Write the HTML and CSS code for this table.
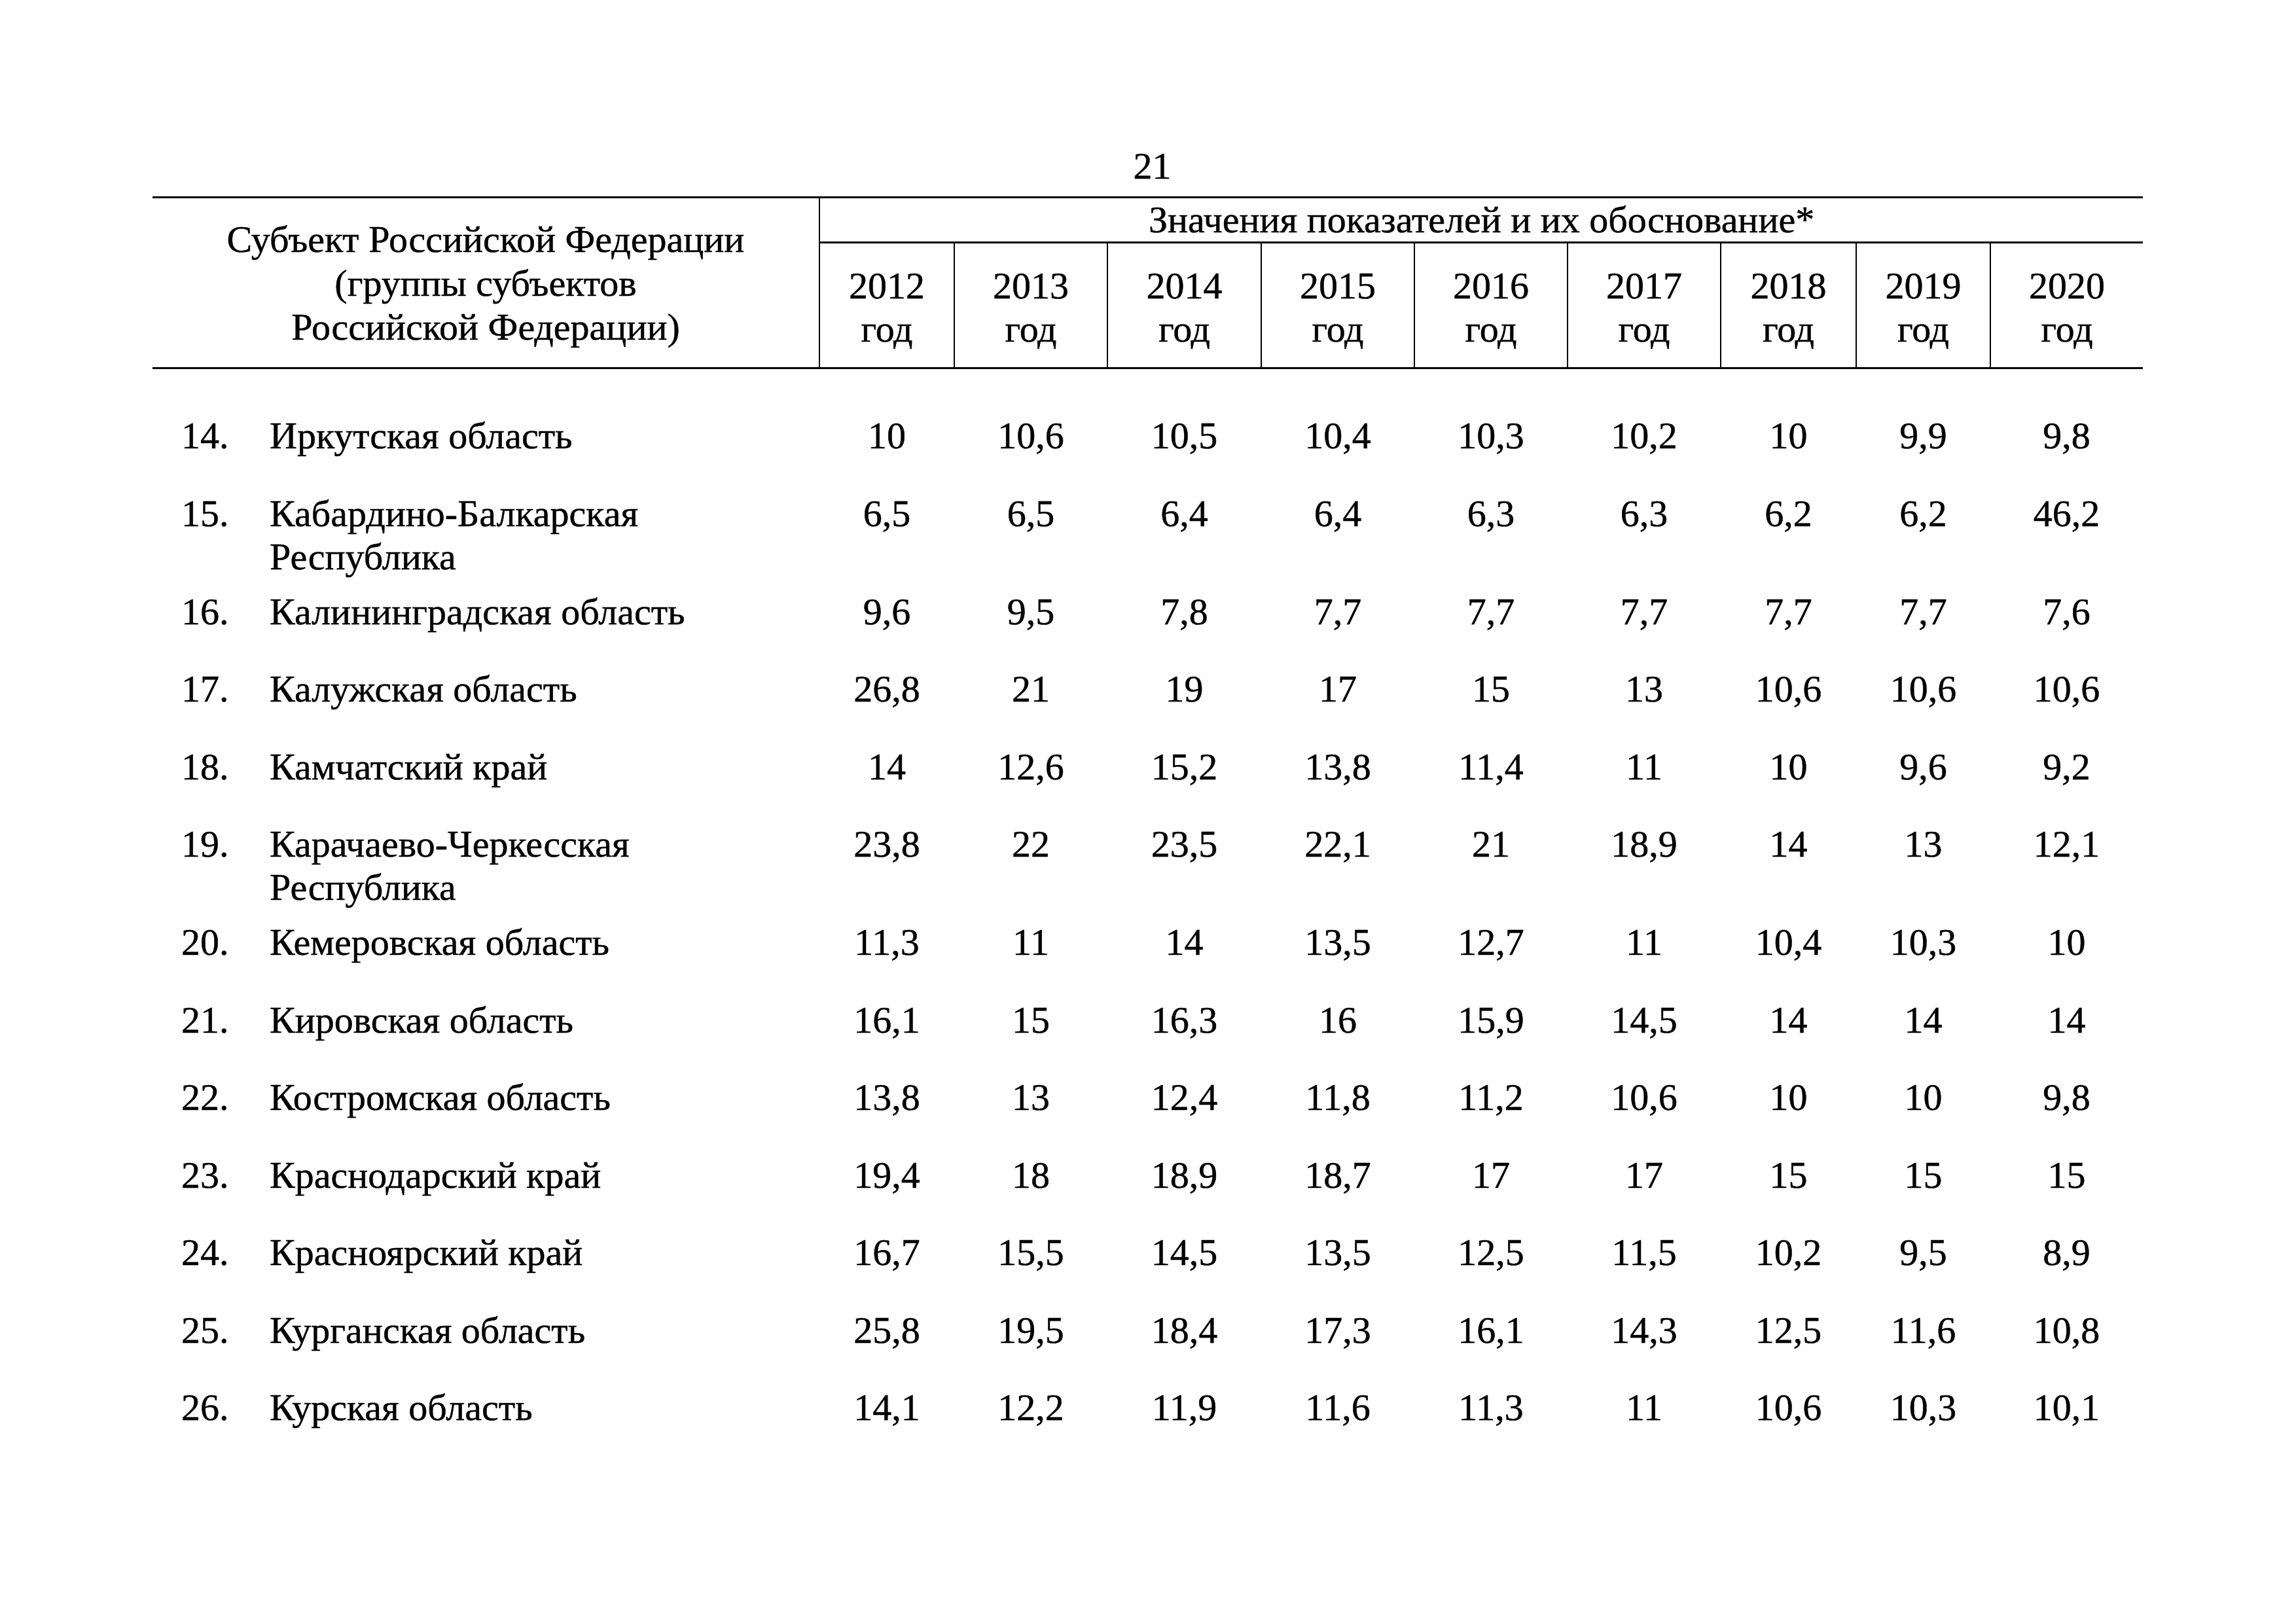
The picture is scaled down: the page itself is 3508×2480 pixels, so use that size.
FILE: index.html
```html
<!DOCTYPE html>
<html lang="ru">
<head>
<meta charset="utf-8">
<title>21</title>
<link rel="stylesheet" href="styles.css">
</head>
<body>
<div class="page">
  <div class="page-num">21</div>
  <table class="data">
    <colgroup>
      <col class="c-num"><col class="c-name">
      <col class="c-205"><col class="c-234"><col class="c-235"><col class="c-234"><col class="c-234"><col class="c-234"><col class="c-207"><col class="c-205b"><col class="c-233">
    </colgroup>
    <thead>
      <tr class="h1">
        <th class="subj" colspan="2" rowspan="2">Субъект Российской Федерации<br>(группы субъектов<br>Российской Федерации)</th>
        <th class="vals" colspan="9">Значения показателей и их обоснование*</th>
      </tr>
      <tr class="h2">
        <th class="yr">2012<br>год</th>
        <th class="yr">2013<br>год</th>
        <th class="yr">2014<br>год</th>
        <th class="yr">2015<br>год</th>
        <th class="yr">2016<br>год</th>
        <th class="yr">2017<br>год</th>
        <th class="yr">2018<br>год</th>
        <th class="yr">2019<br>год</th>
        <th class="yr">2020<br>год</th>
      </tr>
    </thead>
    <tbody>
      <tr class="spacer"><td colspan="11"></td></tr>
      <tr><td class="num">14.</td><td class="name">Иркутская область</td><td>10</td><td>10,6</td><td>10,5</td><td>10,4</td><td>10,3</td><td>10,2</td><td>10</td><td>9,9</td><td>9,8</td></tr>
      <tr><td class="num">15.</td><td class="name">Кабардино-Балкарская<br>Республика</td><td>6,5</td><td>6,5</td><td>6,4</td><td>6,4</td><td>6,3</td><td>6,3</td><td>6,2</td><td>6,2</td><td>46,2</td></tr>
      <tr><td class="num">16.</td><td class="name">Калининградская область</td><td>9,6</td><td>9,5</td><td>7,8</td><td>7,7</td><td>7,7</td><td>7,7</td><td>7,7</td><td>7,7</td><td>7,6</td></tr>
      <tr><td class="num">17.</td><td class="name">Калужская область</td><td>26,8</td><td>21</td><td>19</td><td>17</td><td>15</td><td>13</td><td>10,6</td><td>10,6</td><td>10,6</td></tr>
      <tr><td class="num">18.</td><td class="name">Камчатский край</td><td>14</td><td>12,6</td><td>15,2</td><td>13,8</td><td>11,4</td><td>11</td><td>10</td><td>9,6</td><td>9,2</td></tr>
      <tr><td class="num">19.</td><td class="name">Карачаево-Черкесская<br>Республика</td><td>23,8</td><td>22</td><td>23,5</td><td>22,1</td><td>21</td><td>18,9</td><td>14</td><td>13</td><td>12,1</td></tr>
      <tr><td class="num">20.</td><td class="name">Кемеровская область</td><td>11,3</td><td>11</td><td>14</td><td>13,5</td><td>12,7</td><td>11</td><td>10,4</td><td>10,3</td><td>10</td></tr>
      <tr><td class="num">21.</td><td class="name">Кировская область</td><td>16,1</td><td>15</td><td>16,3</td><td>16</td><td>15,9</td><td>14,5</td><td>14</td><td>14</td><td>14</td></tr>
      <tr><td class="num">22.</td><td class="name">Костромская область</td><td>13,8</td><td>13</td><td>12,4</td><td>11,8</td><td>11,2</td><td>10,6</td><td>10</td><td>10</td><td>9,8</td></tr>
      <tr><td class="num">23.</td><td class="name">Краснодарский край</td><td>19,4</td><td>18</td><td>18,9</td><td>18,7</td><td>17</td><td>17</td><td>15</td><td>15</td><td>15</td></tr>
      <tr><td class="num">24.</td><td class="name">Красноярский край</td><td>16,7</td><td>15,5</td><td>14,5</td><td>13,5</td><td>12,5</td><td>11,5</td><td>10,2</td><td>9,5</td><td>8,9</td></tr>
      <tr><td class="num">25.</td><td class="name">Курганская область</td><td>25,8</td><td>19,5</td><td>18,4</td><td>17,3</td><td>16,1</td><td>14,3</td><td>12,5</td><td>11,6</td><td>10,8</td></tr>
      <tr><td class="num">26.</td><td class="name">Курская область</td><td>14,1</td><td>12,2</td><td>11,9</td><td>11,6</td><td>11,3</td><td>11</td><td>10,6</td><td>10,3</td><td>10,1</td></tr>
    </tbody>
  </table>
</div>
</body>
</html>
```

FILE: styles.css
```css
html, body {
  margin: 0;
  padding: 0;
  background: #ffffff;
}

body {
  width: 3508px;
  height: 2480px;
  color: #000000;
  font-family: "Liberation Serif", "Times New Roman", serif;
  font-size: 58px;
  line-height: 66px;
  -webkit-text-stroke: 0.5px #000000;
}

.page {
  padding: 221px 0 0 233px;
}

.page-num {
  width: 3041px;
  padding-left: 14px;
  box-sizing: border-box;
  text-align: center;
  height: 66px;
  margin-bottom: 13px;
}

.data {
  border-collapse: collapse;
  table-layout: fixed;
  width: 3041px;
}

.c-num { width: 179px; }
.c-name { width: 840px; }
.c-205 { width: 206px; }
.c-234 { width: 234px; }
.c-235 { width: 235px; }
.c-207 { width: 207px; }
.c-205b { width: 205px; }
.c-233 { width: 233px; }

.data th {
  font-weight: normal;
  padding: 0;
  text-align: center;
  vertical-align: middle;
}

.h1 { height: 68px; }
.h2 { height: 192px; }

.subj {
  border-top: 3px solid #000;
  border-bottom: 3px solid #000;
  border-right: 2px solid #000;
  line-height: 67px;
}

.vals {
  border-top: 3px solid #000;
  border-bottom: 3px solid #000;
  border-left: 2px solid #000;
  padding-bottom: 6px;
}

.data th.yr {
  border-bottom: 3px solid #000;
  border-left: 2px solid #000;
  line-height: 66px;
  padding-top: 6px;
}

.spacer td {
  height: 51px;
  padding: 0;
}

.data tbody tr {
  height: 118.5px;
}

.data tbody tr.spacer {
  height: 51px;
}

.data td {
  padding: 0 0 18px 0;
  vertical-align: top;
  text-align: center;
  white-space: nowrap;
}

.data td.num {
  text-align: left;
  padding-left: 44px;
}

.data td.name {
  text-align: left;
}
```
